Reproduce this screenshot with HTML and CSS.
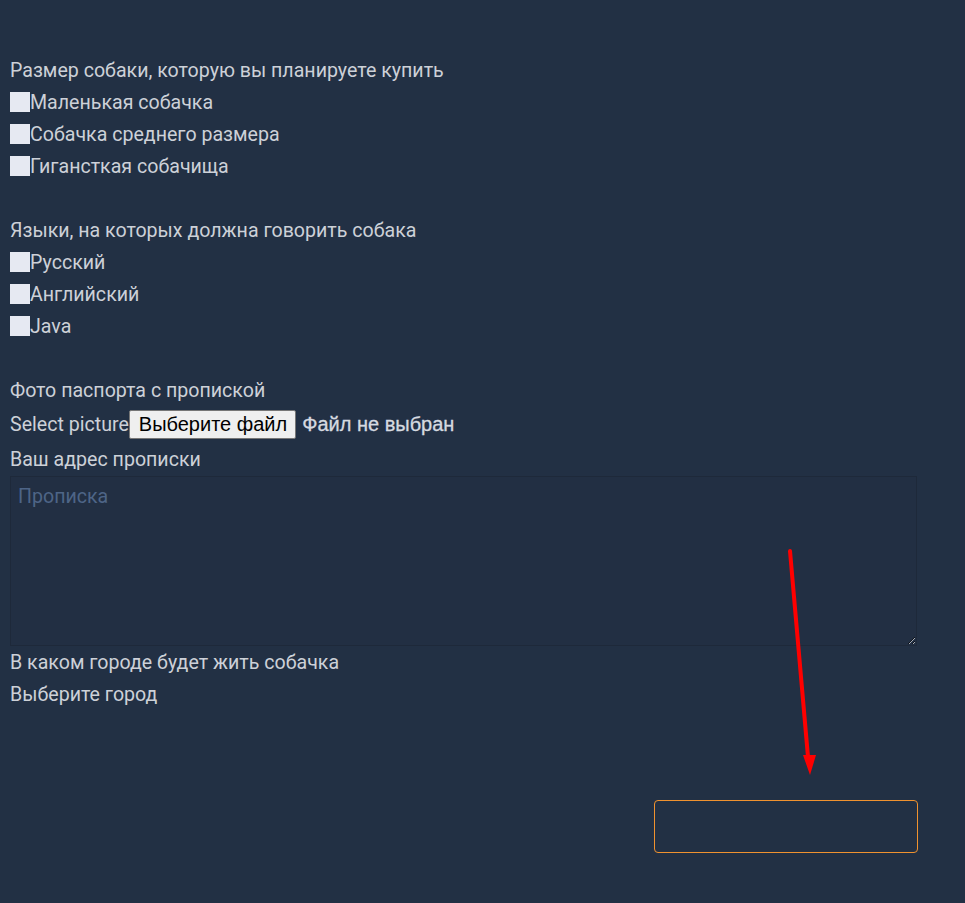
FILE: index.html
```html
<!DOCTYPE html>
<html lang="ru">
<head>
<meta charset="utf-8">
<link rel="stylesheet" href="styles.css">
</head>
<body>
<form class="form">
  <div class="group">
    <div class="line">Размер собаки, которую вы планируете купить</div>
    <label class="line"><input type="checkbox" class="box">Маленькая собачка</label>
    <label class="line"><input type="checkbox" class="box">Собачка среднего размера</label>
    <label class="line"><input type="checkbox" class="box">Гигансткая собачища</label>
  </div>
  <div class="group">
    <div class="line">Языки, на которых должна говорить собака</div>
    <label class="line"><input type="checkbox" class="box">Русский</label>
    <label class="line"><input type="checkbox" class="box">Английский</label>
    <label class="line"><input type="checkbox" class="box">Java</label>
  </div>
  <div class="group last">
    <div class="line">Фото паспорта с пропиской</div>
    <div class="file-row"><span>Select picture</span><span class="file-btn">Выберите файл</span><span class="file-name">Файл не выбран</span></div>
    <div class="line">Ваш адрес прописки</div>
    <textarea class="area" placeholder="Прописка"></textarea>
    <div class="line">В каком городе будет жить собачка</div>
    <div class="line">Выберите город</div>
  </div>
  <div class="actions"><div class="submit"></div></div>
</form>
<svg class="arrow" width="40" height="240" viewBox="780 545 40 240">
  <line x1="790" y1="551" x2="808" y2="757" stroke="#ff0000" stroke-width="4" stroke-linecap="round"/>
  <polygon points="803,755 816,755 810,775" fill="#ff0000"/>
</svg>
</body>
</html>
```

FILE: styles.css
```css
html, body {
  margin: 0;
  background: #223044;
}
body {
  position: relative;
  min-height: 903px;
  font-family: Roboto, "Noto Sans", sans-serif;
  font-size: 19.6px;
  color: #cdd1d8;
}
.form {
  padding: 54px 0 0 10px;
}
.group {
  margin-bottom: 32px;
}
.group.last {
  margin-bottom: 0;
}
.line {
  display: flex;
  align-items: center;
  height: 32px;
}
.box {
  appearance: none;
  -webkit-appearance: none;
  width: 20px;
  height: 20px;
  margin: 0;
  border: none;
  border-radius: 0;
  background: #e6e9f2;
}
.file-row {
  display: flex;
  align-items: center;
  height: 34px;
  margin: 1px 0 2px;
}
.file-btn {
  font-family: "Liberation Sans", Arial, sans-serif;
  font-size: 20px;
  color: #000;
  background: #efefef;
  border: 1px solid #767676;
  border-radius: 2px;
  padding: 2px 8px 3px 9px;
  line-height: 22px;
}
.file-name {
  font-family: "Liberation Sans", Arial, sans-serif;
  font-size: 20px;
  margin-left: 6px;
  color: #d6dae0;
  -webkit-text-stroke: 0.3px #d6dae0;
}
.area {
  display: block;
  box-sizing: border-box;
  width: 907px;
  height: 170px;
  margin: 1px 0 0;
  padding: 8px 7px;
  background: #222f43;
  border: 1px solid #1e293a;
  border-radius: 0;
  color: #d0d4db;
  font-family: Roboto, sans-serif;
  font-size: 19.6px;
  resize: both;
  outline: none;
}
.area::placeholder {
  color: #4e6587;
}
.actions {
  display: flex;
  justify-content: flex-end;
  padding: 90px 47px 0 0;
}
.submit {
  width: 262px;
  height: 51px;
  border: 1px solid #f0922f;
  border-radius: 4px;
}
.arrow {
  position: absolute;
  left: 780px;
  top: 545px;
}
```
